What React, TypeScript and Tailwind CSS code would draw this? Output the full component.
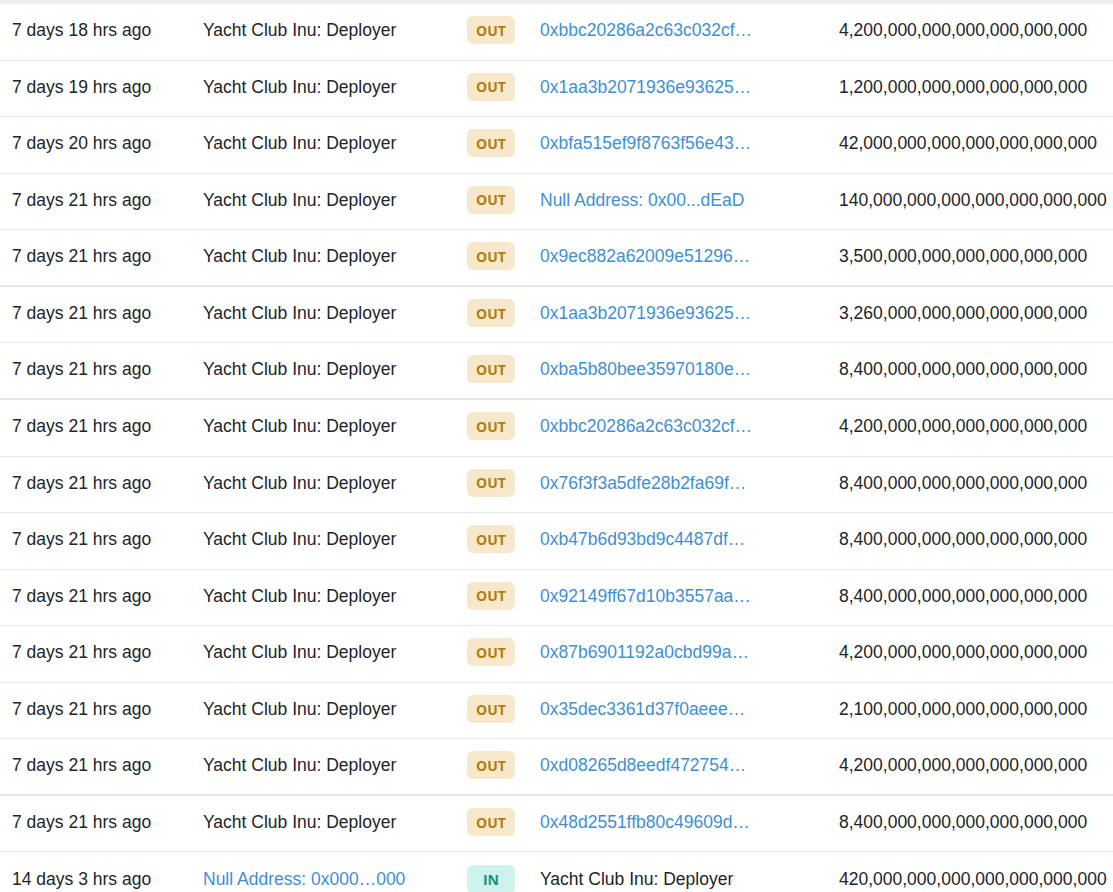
const rows = [
  { age: "7 days 18 hrs ago", to: "0xbbc20286a2c63c032cf…", amount: "4,200,000,000,000,000,000,000" },
  { age: "7 days 19 hrs ago", to: "0x1aa3b2071936e93625…", amount: "1,200,000,000,000,000,000,000" },
  { age: "7 days 20 hrs ago", to: "0xbfa515ef9f8763f56e43…", amount: "42,000,000,000,000,000,000,000" },
  { age: "7 days 21 hrs ago", to: "Null Address: 0x00...dEaD", amount: "140,000,000,000,000,000,000,000" },
  { age: "7 days 21 hrs ago", to: "0x9ec882a62009e51296…", amount: "3,500,000,000,000,000,000,000", thick: true },
  { age: "7 days 21 hrs ago", to: "0x1aa3b2071936e93625…", amount: "3,260,000,000,000,000,000,000" },
  { age: "7 days 21 hrs ago", to: "0xba5b80bee35970180e…", amount: "8,400,000,000,000,000,000,000", thick: true },
  { age: "7 days 21 hrs ago", to: "0xbbc20286a2c63c032cf…", amount: "4,200,000,000,000,000,000,000" },
  { age: "7 days 21 hrs ago", to: "0x76f3f3a5dfe28b2fa69f…", amount: "8,400,000,000,000,000,000,000" },
  { age: "7 days 21 hrs ago", to: "0xb47b6d93bd9c4487df…", amount: "8,400,000,000,000,000,000,000" },
  { age: "7 days 21 hrs ago", to: "0x92149ff67d10b3557aa…", amount: "8,400,000,000,000,000,000,000" },
  { age: "7 days 21 hrs ago", to: "0x87b6901192a0cbd99a…", amount: "4,200,000,000,000,000,000,000" },
  { age: "7 days 21 hrs ago", to: "0x35dec3361d37f0aeee…", amount: "2,100,000,000,000,000,000,000" },
  { age: "7 days 21 hrs ago", to: "0xd08265d8eedf472754…", amount: "4,200,000,000,000,000,000,000", thick: true },
  { age: "7 days 21 hrs ago", to: "0x48d2551ffb80c49609d…", amount: "8,400,000,000,000,000,000,000" },
];

function Badge({ dir }: { dir: "OUT" | "IN" }) {
  return dir === "OUT" ? (
    <span className="inline-flex h-[28px] w-[48px] items-center justify-center rounded-[6px] bg-[#f7e8cb] text-[14px] font-bold text-[#b07d10] font-['Liberation_Sans_Narrow','Open_Sans',sans-serif]">
      OUT
    </span>
  ) : (
    <span className="inline-flex h-[28px] w-[48px] items-center justify-center rounded-[6px] bg-[#cdf3ec] text-[14px] font-bold text-[#14907a] font-['Liberation_Sans_Narrow','Open_Sans',sans-serif]">
      IN
    </span>
  );
}

const grid = "grid grid-cols-[191px_264px_73px_299px_1fr] items-center pb-[3px] h-[56.57px] border-[#e5e7ea]";

export default function App() {
  return (
    <div className="w-[1113px] h-[892px] overflow-hidden bg-white text-[17.5px] text-[#212529] font-['Liberation_Sans',Arial,sans-serif]">
      <div className="h-[4px] bg-[#eef0f4]" />
      {rows.map((r, i) => (
        <div key={i} className={`${grid} ${r.thick ? "border-b-2" : "border-b"}`}>
          <div className="pl-[12px] whitespace-nowrap">{r.age}</div>
          <div className="pl-[12px] whitespace-nowrap">Yacht Club Inu: Deployer</div>
          <div className="pl-[12px]">
            <Badge dir="OUT" />
          </div>
          <div className="pl-[12px] whitespace-nowrap text-[#3f8fd2]">{r.to}</div>
          <div className="pl-[12px] whitespace-nowrap">{r.amount}</div>
        </div>
      ))}
      <div className={grid}>
        <div className="pl-[12px] whitespace-nowrap">14 days 3 hrs ago</div>
        <div className="pl-[12px] whitespace-nowrap text-[#3f8fd2]">Null Address: 0x000…000</div>
        <div className="pl-[12px]">
          <Badge dir="IN" />
        </div>
        <div className="pl-[12px] whitespace-nowrap">Yacht Club Inu: Deployer</div>
        <div className="pl-[12px] whitespace-nowrap">420,000,000,000,000,000,000,000</div>
      </div>
    </div>
  );
}
